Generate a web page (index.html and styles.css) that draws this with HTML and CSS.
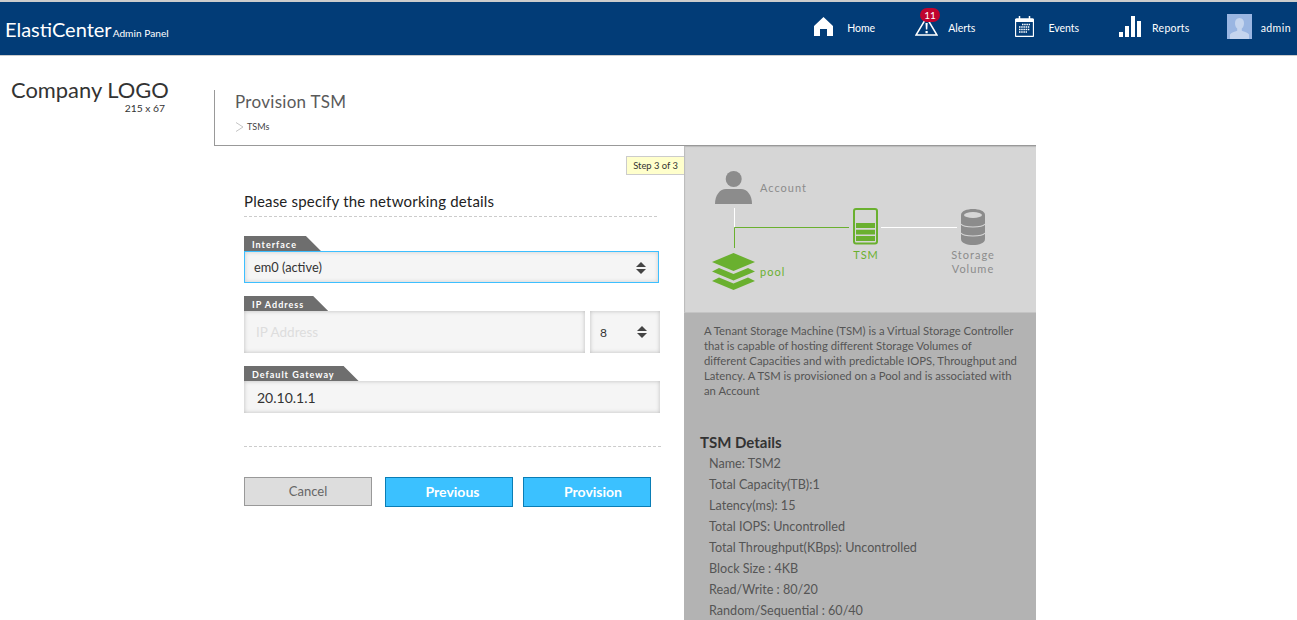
FILE: index.html
```html
<!DOCTYPE html>
<html lang="en">
<head>
  <meta charset="UTF-8" />
  <title>ElastiCenter - Provision TSM</title>
  <meta name="viewport" content="width=device-width, initial-scale=1" />
  <link rel="stylesheet" href="styles.css">
</head>
<body>
  <header class="topbar">
    <div class="brand">ElastiCenter<small>Admin Panel</small></div>
    <nav class="nav">
      <a class="nav-item">
        <svg class="nav-icon" width="19" height="19" viewBox="0 0 19 19"><path d="M9.5 0 19 9v10h-6v-7H6v7H0V9z" fill="#fff"/></svg>
        <span>Home</span>
      </a>
      <a class="nav-item alerts">
        <svg class="nav-icon" width="23" height="20" viewBox="0 0 23 20"><path d="M11.5 1.5 22 19H1z" fill="none" stroke="#fff" stroke-width="1.5"/><path d="M10.5 7h2.2l-.4 6.5h-1.4zM10.5 15h2.2v2.2h-2.2z" fill="#fff"/></svg>
        <b class="badge">11</b>
        <span>Alerts</span>
      </a>
      <a class="nav-item">
        <svg class="nav-icon" width="19" height="21" viewBox="0 0 19 21"><path d="M1.5 3h16a1 1 0 0 1 1 1v15.500a1 1 0 0 1-1 1h-16a1 1 0 0 1-1-1V4a1 1 0 0 1 1-1z" fill="none" stroke="#fff" stroke-width="1.300"/><rect x="0.500" y="3" width="18" height="3" fill="#fff"/><path d="M4.500 0v4M14.500 0v4" stroke="#fff" stroke-width="1.500"/><path d="M7 8.500h8M4 11h11M4 13.500h11M4 16h8" stroke="#fff" stroke-width="1.500" stroke-dasharray="1.500 .7"/></svg>
        <span>Events</span>
      </a>
      <a class="nav-item reports">
        <svg class="nav-icon" width="22" height="21" viewBox="0 0 22 21" fill="#fff"><rect y="16" width="4" height="5"/><rect x="6" y="10" width="4" height="11"/><rect x="12" y="0" width="4" height="21"/><rect x="18" y="5" width="4" height="16"/></svg>
        <span>Reports</span>
      </a>
      <a class="nav-item admin">
        <svg class="avatar" width="25" height="25" viewBox="0 0 25 25"><rect width="25" height="25" fill="#9ab6e2"/><path d="M12.500 4c3 0 4.500 2.200 4.500 5.200 0 2.300-1 4.300-2.200 5.400v2.200c2.500 1 6.200 2 7.200 3.700V25H3v-4.500c1-1.700 4.700-2.700 7.200-3.700v-2.200C9 13.500 8 11.500 8 9.200 8 6.200 9.500 4 12.500 4z" fill="#c5d5ee"/></svg>
        <span>admin</span>
      </a>
    </nav>
  </header>

  <div class="page">
    <aside class="logo-col">
      <div class="logo">Company LOGO</div>
      <div class="logo-size">215 x 67</div>
    </aside>

    <main class="content">
      <div class="title-box">
        <h1>Provision TSM</h1>
        <div class="crumb">
          <svg width="9" height="10" viewBox="0 0 9 10"><path d="M1 .5 8 5 1 9.500" fill="none" stroke="#c4c4c4" stroke-width="1"/></svg>
          <span>TSMs</span>
        </div>
      </div>

      <div class="columns">
        <section class="form-col">
          <div class="step">Step 3 of 3</div>
          <h2>Please specify the networking details</h2>

          <div class="field">
            <label class="tag">Interface</label>
            <div class="control select-wrap focused">
              <select class="input"><option>em0 (active)</option></select>
              <i class="arrows"></i>
            </div>
          </div>

          <div class="field">
            <label class="tag">IP Address</label>
            <div class="ip-row">
              <div class="control tall grow"><input class="input ip" type="text" placeholder="IP Address" /></div>
              <div class="control tall select-wrap mask">
                <select class="input"><option>8</option></select>
                <i class="arrows"></i>
              </div>
            </div>
          </div>

          <div class="field">
            <label class="tag">Default Gateway</label>
            <div class="control"><input class="input gateway" type="text" value="20.10.1.1" /></div>
          </div>

          <div class="actions">
            <button class="btn cancel">Cancel</button>
            <button class="btn primary prev">Previous</button>
            <button class="btn primary last">Provision</button>
          </div>
        </section>

        <section class="info-col">
          <div class="diagram">
            <svg width="352" height="166" viewBox="684 146 352 166">
              <!-- links -->
              <path d="M734.500 208v19" stroke="#fff" stroke-width="1" fill="none"/>
              <path d="M734.500 248v-20.500H849" stroke="#6ab02f" stroke-width="1" fill="none"/>
              <path d="M881 227.500h76" stroke="#fff" stroke-width="1" fill="none"/>
              <!-- account -->
              <circle cx="733.700" cy="179" r="8" fill="#8c8c8c"/>
              <path d="M715 204c0-9 5-15 11-15h15c6 0 11 6 11 15z" fill="#8c8c8c"/>
              <text class="dg-text" x="760" y="192">Account</text>
              <!-- pool -->
              <path d="M733.500 253 755 262l-21.500 9L712 262z" fill="#6ab02f"/>
              <path d="M719 268l14.500 6 14.500-6 7 3.500-21.500 9-21.500-9z" fill="#6ab02f"/>
              <path d="M719 277.500l14.500 6 14.500-6 7 3.500-21.500 9-21.500-9z" fill="#6ab02f"/>
              <text class="dg-text green" x="760" y="276">pool</text>
              <!-- tsm -->
              <rect x="854" y="209" width="23" height="34.500" rx="2" fill="none" stroke="#6ab02f" stroke-width="2"/>
              <path d="M856 223h19v5h-19zM856 229.800h19v4.700h-19zM856 236h19v5h-19z" fill="#6ab02f"/>
              <text class="dg-text green" x="866" y="259" text-anchor="middle">TSM</text>
              <!-- storage -->
              <path d="M961 215c0-8 24-8 24 0v24c0 8-24 8-24 0z" fill="#8c8c8c"/>
              <ellipse cx="973" cy="215" rx="9" ry="3" fill="#d6d6d6"/>
              <path d="M961 224c3 4 21 4 24 0M961 233c3 4 21 4 24 0" fill="none" stroke="#d6d6d6" stroke-width="1.200"/>
              <text class="dg-text" x="973" y="259" text-anchor="middle">Storage</text>
              <text class="dg-text" x="973" y="273" text-anchor="middle">Volume</text>
            </svg>
          </div>
          <div class="info">
            <p class="blurb">A Tenant Storage Machine (TSM) is a Virtual Storage Controller<br>that is capable of hosting different Storage Volumes of<br>different Capacities and with predictable IOPS, Throughput and<br>Latency. A TSM is provisioned on a Pool and is associated with<br>an Account</p>
            <h3>TSM Details</h3>
            <ul class="details">
              <li>Name: TSM2</li>
              <li>Total Capacity(TB):1</li>
              <li>Latency(ms): 15</li>
              <li>Total IOPS: Uncontrolled</li>
              <li>Total Throughput(KBps): Uncontrolled</li>
              <li>Block Size : 4KB</li>
              <li>Read/Write : 80/20</li>
              <li>Random/Sequential : 60/40</li>
            </ul>
          </div>
        </section>
      </div>
    </main>
  </div>
</body>
</html>
```

FILE: styles.css
```css
html, body { margin: 0; height: 620px; overflow: hidden; background: #fff; }
body { font-family: "Lato", "Open Sans", sans-serif; color: #333; }

.topbar {
  height: 53px; background: #023c77; border-top: 2px solid #ccc; border-bottom: 1px solid #ccc;
  display: flex; align-items: center; justify-content: space-between;
}
.brand { color: #fff; font-size: 20px; padding-left: 5px; display: flex; align-items: baseline; }
.brand small { font-size: 10.200px; margin-left: 1px; }
.nav { display: flex; align-items: center; gap: 40px; padding: 0 6px 5px 0; }
.nav-item { display: flex; align-items: center; gap: 14px; color: #fff; font-size: 10.500px; position: relative; }
.nav-item span { padding-top: 3px; }
.nav-item.alerts { gap: 10px; }
.nav-item.reports { gap: 11px; letter-spacing: .25px; }
.nav-item.admin { gap: 9px; margin-left: -3px; letter-spacing: .45px; }
.nav-icon, .avatar { display: block; }
.badge {
  position: absolute; left: 5px; top: -8px; width: 20px; height: 14px; border-radius: 7px;
  background: #c0042e; color: #fff; font-size: 10px; font-weight: normal; line-height: 14px; text-align: center;
}

.page { display: flex; }
.logo-col { width: 214px; flex: none; padding-top: 20px; box-sizing: border-box; }
.logo { font-size: 21.900px; line-height: 27px; padding-left: 11px; color: #333; white-space: nowrap; }
.logo-size { font-size: 10.300px; line-height: 10px; width: 165px; text-align: right; }

.content { width: 822px; margin-top: 34px; }
.title-box { height: 55px; border-left: 1px solid #999; border-bottom: 1px solid #999; padding-left: 20px; }
.title-box h1 { margin: 0; font-size: 17px; line-height: 24px; font-weight: normal; color: #5a5a5a; letter-spacing: .3px; }
.crumb { display: flex; align-items: center; gap: 3px; margin-top: 7px; font-size: 9px; color: #444; }

.columns { display: flex; }
.form-col { width: 470px; flex: none; box-sizing: border-box; padding: 45px 24px 0 30px; position: relative; }
.step {
  position: absolute; right: 0; top: 10px; height: 17px; padding: 0 6px; line-height: 17px;
  font-size: 9.400px; background: #ffc; border: 1px solid #ccc; border-right: 0; color: #333;
}
h2 {
  margin: 0 0 19px; width: 413px; height: 25px; font-size: 15px; line-height: 20px; font-weight: normal;
  letter-spacing: .2px; color: #222; border-bottom: 1px dashed #ccc;
}
.field { margin-bottom: 13px; }
.tag {
  display: block; width: max-content; height: 15px; box-sizing: border-box; padding: 0 24px 0 8px;
  background: #6e6e6e; color: #fff; font-size: 9px; font-weight: bold; letter-spacing: 1px; line-height: 17px;
  clip-path: polygon(0 0, calc(100% - 15px) 0, 100% 100%, 0 100%);
}
.control { height: 32px; width: 416px; box-sizing: border-box; position: relative; }
.control.focused { width: 415px; }
.control.tall { height: 42px; }
.control.grow { width: 341px; }
.control.mask { width: 70px; }
.ip-row { display: flex; gap: 5px; width: 416px; }
.input {
  display: block; width: 100%; height: 100%; box-sizing: border-box; margin: 0; border: 0; border-radius: 0;
  appearance: none; -webkit-appearance: none; outline: none; background: #f5f5f5;
  box-shadow: inset 0 0 4px #bbb; font: 12px "Lato", "Open Sans", sans-serif; color: #333; padding: 0 10px;
}
.focused .input { border: 1px solid #3dbfff; box-shadow: inset 0 0 4px #ccc; font-size: 12.800px; padding-left: 9px; }
.ip { font-size: 13.500px; padding: 0 12px; }
.ip::placeholder { color: #ddd; opacity: 1; }
.gateway { font-size: 14px; padding-left: 13px; }
.arrows { position: absolute; right: 13px; top: 11px; width: 10px; height: 12px; pointer-events: none; }
.tall .arrows { top: 15px; }
.arrows::before, .arrows::after { content: ""; position: absolute; left: 0; border-left: 5px solid transparent; border-right: 5px solid transparent; }
.arrows::before { top: 0; border-bottom: 5px solid #444; }
.arrows::after { bottom: 0; border-top: 5px solid #444; }

.actions { margin-top: 33px; border-top: 1px dashed #ccc; padding-top: 30px; width: 417px; display: flex; gap: 13px; align-items: flex-start; }
.btn { width: 128px; box-sizing: border-box; font: 13px "Lato", "Open Sans", sans-serif; padding: 0 0 2px; }
.cancel { height: 29px; background: #ddd; border: 1px solid #999; color: #666; }
.primary { height: 30px; background: #3bc1ff; border: 1px solid #0a7db5; color: #fff; font-size: 14px; font-weight: bold; }
.primary.prev { padding-left: 7px; }
.primary.last { margin-left: -3px; padding-left: 12px; }

.info-col { width: 352px; flex: none; }
.diagram { height: 166px; background: #d6d6d6; border-bottom: 1px solid #c4c4c4; box-shadow: inset 1px 1px 1px #bbb; }
.diagram svg { display: block; }
.dg-text { font-size: 11px; letter-spacing: 1px; fill: #8c8c8c; }
.dg-text.green { fill: #6ab02f; }
.info { background: #b3b3b3; height: 320px; padding: 10px 16px 0 20px; box-sizing: border-box; }
.blurb { margin: 0; font-size: 11.300px; line-height: 15px; color: #555; white-space: nowrap; }
h3 { margin: 35px 0 0 -4px; font-size: 15px; line-height: 18px; color: #333; }
.details { list-style: none; margin: 2px 0 0 5px; padding: 0; }
.details li { font-size: 12.600px; line-height: 21px; color: #555; white-space: nowrap; }
```
